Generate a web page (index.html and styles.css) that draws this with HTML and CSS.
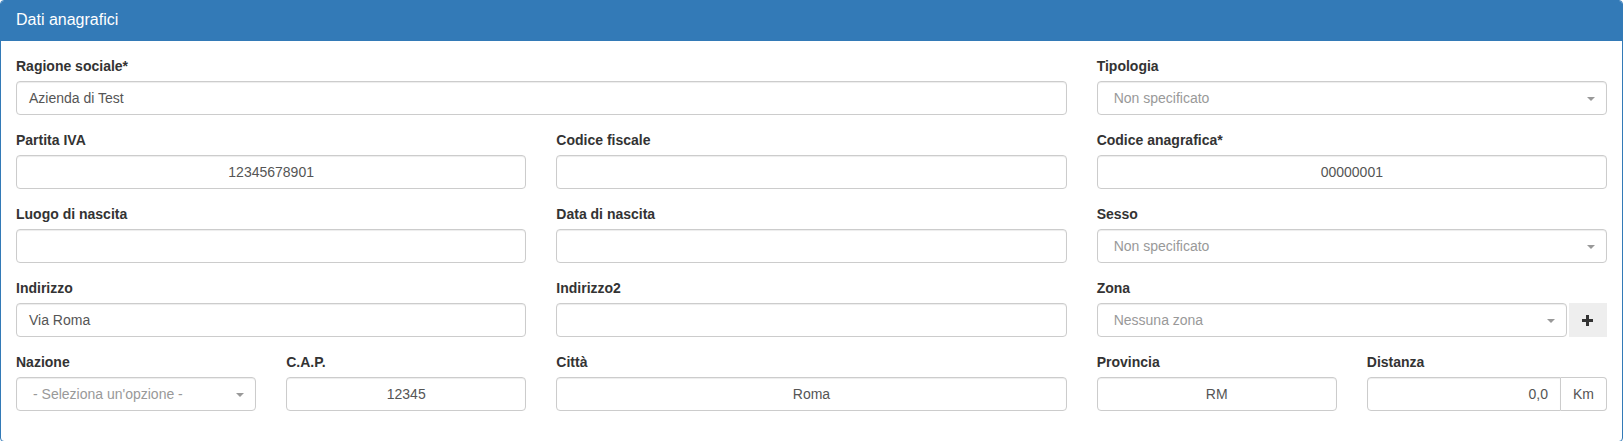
FILE: index.html
```html
<!DOCTYPE html>
<html lang="it">
<head>
<meta charset="utf-8">
<title>Dati anagrafici</title>
<link rel="stylesheet" href="styles.css">
</head>
<body>
<div class="panel">
  <div class="panel-heading">Dati anagrafici</div>
  <div class="panel-body">
    <div class="row">
      <div class="col col-8">
        <label class="lbl">Ragione sociale*</label>
        <div class="control">Azienda di Test</div>
      </div>
      <div class="col col-4">
        <label class="lbl">Tipologia</label>
        <div class="select"><span class="placeholder">Non specificato</span><span class="caret"></span></div>
      </div>
    </div>
    <div class="row">
      <div class="col col-4">
        <label class="lbl">Partita IVA</label>
        <div class="control center">12345678901</div>
      </div>
      <div class="col col-4">
        <label class="lbl">Codice fiscale</label>
        <div class="control"></div>
      </div>
      <div class="col col-4">
        <label class="lbl">Codice anagrafica*</label>
        <div class="control center">00000001</div>
      </div>
    </div>
    <div class="row">
      <div class="col col-4">
        <label class="lbl">Luogo di nascita</label>
        <div class="control"></div>
      </div>
      <div class="col col-4">
        <label class="lbl">Data di nascita</label>
        <div class="control"></div>
      </div>
      <div class="col col-4">
        <label class="lbl">Sesso</label>
        <div class="select"><span class="placeholder">Non specificato</span><span class="caret"></span></div>
      </div>
    </div>
    <div class="row">
      <div class="col col-4">
        <label class="lbl">Indirizzo</label>
        <div class="control">Via Roma</div>
      </div>
      <div class="col col-4">
        <label class="lbl">Indirizzo2</label>
        <div class="control"></div>
      </div>
      <div class="col col-4">
        <label class="lbl">Zona</label>
        <div class="input-group">
          <div class="select grow"><span class="placeholder">Nessuna zona</span><span class="caret"></span></div>
          <button class="btn-add" type="button">
            <svg width="11" height="11" viewBox="0 0 11 11"><rect x="4" y="0" width="3" height="11" fill="#333"/><rect x="0" y="4" width="11" height="3" fill="#333"/></svg>
          </button>
        </div>
      </div>
    </div>
    <div class="row">
      <div class="col col-2">
        <label class="lbl">Nazione</label>
        <div class="select"><span class="placeholder">- Seleziona un'opzione -</span><span class="caret"></span></div>
      </div>
      <div class="col col-2">
        <label class="lbl">C.A.P.</label>
        <div class="control center">12345</div>
      </div>
      <div class="col col-4">
        <label class="lbl">Città</label>
        <div class="control center">Roma</div>
      </div>
      <div class="col col-2">
        <label class="lbl">Provincia</label>
        <div class="control center">RM</div>
      </div>
      <div class="col col-2">
        <label class="lbl">Distanza</label>
        <div class="input-group">
          <div class="control right grow joined">0,0</div>
          <div class="addon">Km</div>
        </div>
      </div>
    </div>
  </div>
</div>
</body>
</html>
```

FILE: styles.css
```css
* { box-sizing: border-box; }

html, body {
  margin: 0;
  padding: 0;
  background: #fff;
  font-family: "Liberation Sans", Arial, Helvetica, sans-serif;
  font-size: 14px;
  line-height: 20px;
  color: #333;
}

.panel {
  border: 1px solid #337ab7;
  border-radius: 4px;
  background: #fff;
  width: 100%;
}

.panel-heading {
  background: #337ab7;
  color: #fff;
  font-size: 16px;
  line-height: 20px;
  padding: 9px 15px 11px;
  border-radius: 3px 3px 0 0;
}

.panel-body {
  padding: 15px;
}

.row {
  display: grid;
  grid-template-columns: repeat(12, 1fr);
  margin: 0 -15px;
}

.col {
  padding: 0 15px;
  margin-bottom: 15px;
  min-width: 0;
}

.col-2 { grid-column: span 2; }
.col-4 { grid-column: span 4; }
.col-8 { grid-column: span 8; }

.lbl {
  display: block;
  font-weight: bold;
  margin-bottom: 5px;
  line-height: 20px;
  height: 20px;
  white-space: nowrap;
}

.control {
  height: 34px;
  padding: 6px 12px;
  border: 1px solid #ccc;
  border-radius: 4px;
  color: #555;
  background: #fff;
  box-shadow: inset 0 1px 1px rgba(0, 0, 0, 0.075);
  white-space: nowrap;
  overflow: hidden;
}

.center { text-align: center; }
.right { text-align: right; }

.select {
  height: 34px;
  padding: 6px 24px 6px 16px;
  border: 1px solid #ccc;
  border-radius: 4px;
  background: #fff;
  box-shadow: inset 0 1px 1px rgba(0, 0, 0, 0.075);
  position: relative;
  white-space: nowrap;
}

.placeholder { color: #999; }

.caret {
  position: absolute;
  right: 11px;
  top: 15px;
  width: 0;
  height: 0;
  border-top: 4px solid #999;
  border-left: 4px solid transparent;
  border-right: 4px solid transparent;
}

.input-group {
  display: flex;
  align-items: stretch;
}

.grow { flex: 1; min-width: 0; }

.btn-add {
  width: 38px;
  height: 34px;
  margin-left: 2px;
  border: 0;
  background: #eee;
  padding: 0;
  display: flex;
  align-items: center;
  justify-content: center;
  cursor: pointer;
}

.btn-add svg { display: block; }

.joined {
  border-top-right-radius: 0;
  border-bottom-right-radius: 0;
}

.addon {
  height: 34px;
  padding: 6px 12px;
  border: 1px solid #ccc;
  border-left: 0;
  border-radius: 0 4px 4px 0;
  color: #555;
  background: #fff;
  white-space: nowrap;
}
```
